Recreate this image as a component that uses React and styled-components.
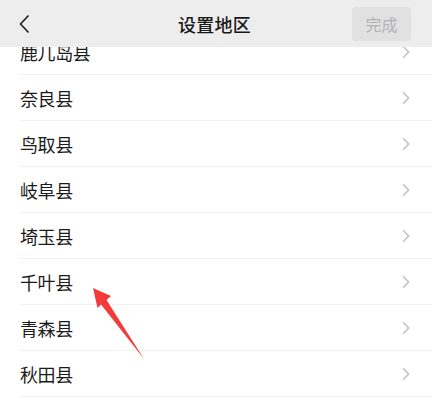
import React from 'react'
import styled, { createGlobalStyle } from 'styled-components'

const GlobalStyle = createGlobalStyle`
  html, body {
    margin: 0;
    padding: 0;
    background: #ffffff;
  }
  body {
    font-family: "Noto Sans CJK SC", "Noto Sans", sans-serif;
    -webkit-font-smoothing: antialiased;
  }
`

const prefectures = [
  '鹿儿岛县',
  '奈良县',
  '鸟取县',
  '岐阜县',
  '埼玉县',
  '千叶县',
  '青森县',
  '秋田县',
]

const Page = styled.div`
  position: relative;
  width: 432px;
  height: 401px;
  overflow: hidden;
  background: #ffffff;
  display: flex;
  flex-direction: column;
`

const NavBar = styled.header`
  height: 47px;
  flex: none;
  background: #ededed;
  display: grid;
  grid-template-columns: 1fr auto 1fr;
  align-items: center;
  padding: 0 21px 0 18px;
  position: relative;
  z-index: 1;
`

const BackButton = styled.button`
  justify-self: start;
  border: none;
  background: transparent;
  padding: 0;
  width: 16px;
  height: 22px;
  display: flex;
  align-items: center;
  svg {
    display: block;
  }
`

const Title = styled.h1`
  margin: 0;
  font-size: 18px;
  font-weight: 500;
  color: #191919;
  letter-spacing: 0.2px;
`

const DoneButton = styled.button`
  justify-self: end;
  width: 59px;
  height: 34px;
  border: none;
  border-radius: 4px;
  background: #e1e1e1;
  color: #b2b2b2;
  font-family: inherit;
  font-size: 16px;
  padding: 0;
`

const ListViewport = styled.div`
  flex: 1;
  overflow: hidden;
`

const List = styled.ul`
  list-style: none;
  margin: -18px 0 0 0;
  padding: 0 0 0 20px;
`

const Row = styled.li`
  height: 45px;
  border-bottom: 1px solid #f1f1f1;
  display: flex;
  align-items: center;
  justify-content: space-between;
  padding-right: 22px;
`

const Name = styled.span`
  font-size: 18px;
  color: #1b1b1b;
  letter-spacing: -0.4px;
`

const Pointer = styled.svg`
  position: absolute;
  left: 0;
  top: 0;
  pointer-events: none;
`

const Chevron = () => (
  <svg width="8" height="14" viewBox="0 0 8 14">
    <polyline
      points="1.2,1.2 6.6,7 1.2,12.8"
      fill="none"
      stroke="#c3c3c3"
      strokeWidth="1.6"
    />
  </svg>
)

export default function App() {
  return (
    <>
      <GlobalStyle />
      <Page>
        <NavBar>
          <BackButton>
            <svg width="12" height="20" viewBox="0 0 12 20">
              <polyline
                points="10.5,1.5 2.5,10 10.5,18.5"
                fill="none"
                stroke="#1e1e1e"
                strokeWidth="1.6"
              />
            </svg>
          </BackButton>
          <Title>设置地区</Title>
          <DoneButton>完成</DoneButton>
        </NavBar>
        <ListViewport>
          <List>
            {prefectures.map((name) => (
              <Row key={name}>
                <Name>{name}</Name>
                <Chevron />
              </Row>
            ))}
          </List>
        </ListViewport>
        {/* red marker pointing at the 千叶县 row */}
        <Pointer width="432" height="401" viewBox="0 0 432 401">
          <polygon
            points="93,288 111,296 106.5,300 144,359 101,304.5 97.5,308"
            fill="#f53a3a"
          />
        </Pointer>
      </Page>
    </>
  )
}
